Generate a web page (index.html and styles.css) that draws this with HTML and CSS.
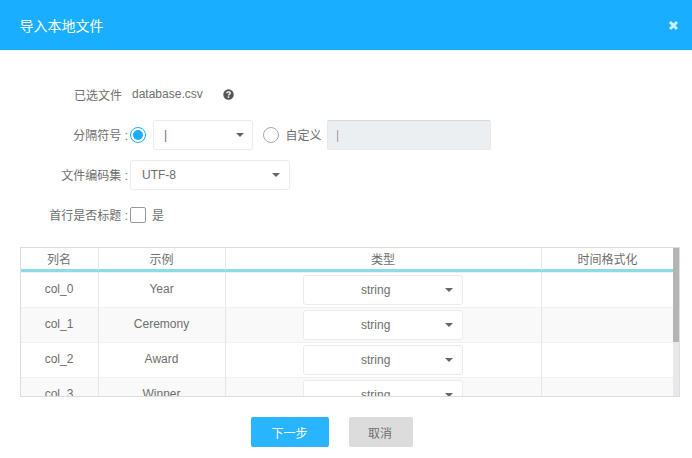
FILE: index.html
```html
<!DOCTYPE html>
<html lang="en">
  <head>
    <meta charset="UTF-8" />
    <meta name="viewport" content="width=device-width, initial-scale=1.0" />
    <title>导入本地文件</title>
    <link rel="stylesheet" href="styles.css">
  </head>
  <body>
    <div class="modal">
      <header class="modal-head">
        <span class="modal-title">导入本地文件</span>
        <svg class="close-icon" width="11" height="11" viewBox="0 0 11 11">
          <path d="M2 2 L9 9 M9 2 L2 9" />
        </svg>
      </header>

      <section class="form">
        <div class="form-row">
          <span class="form-label form-label-plain">已选文件</span>
          <span class="file-name">database.csv</span>
          <svg class="help-icon" width="11" height="11" viewBox="0 0 12 12">
            <circle cx="6" cy="6" r="5.7" fill="#555" />
            <path d="M4.1 4.7 C4.1 2.6 7.9 2.6 7.9 4.5 C7.9 5.7 6 5.7 6 7.2" fill="none" stroke="#fff" stroke-width="1.5" />
            <rect x="5.2" y="8" width="1.6" height="1.6" fill="#fff" />
          </svg>
        </div>

        <div class="form-row">
          <span class="form-label">分隔符号 :</span>
          <span class="radio radio-on"></span>
          <div class="select select-sep">
            <span>|</span>
            <i class="caret"></i>
          </div>
          <span class="radio radio-custom"></span>
          <span class="custom-label">自定义</span>
          <div class="custom-input">|</div>
        </div>

        <div class="form-row">
          <span class="form-label">文件编码集 :</span>
          <div class="select select-enc">
            <span>UTF-8</span>
            <i class="caret"></i>
          </div>
        </div>

        <div class="form-row">
          <span class="form-label">首行是否标题 :</span>
          <span class="checkbox"></span>
          <span class="check-label">是</span>
        </div>
      </section>

      <div class="table-box">
        <div class="table-clip">
          <table class="col-table">
            <thead>
              <tr>
                <th class="col-name">列名</th>
                <th class="col-sample">示例</th>
                <th class="col-type">类型</th>
                <th>时间格式化</th>
              </tr>
            </thead>
            <tbody>
              <tr>
                <td>col_0</td>
                <td>Year</td>
                <td><div class="select select-type"><span>string</span><i class="caret"></i></div></td>
                <td></td>
              </tr>
              <tr>
                <td>col_1</td>
                <td>Ceremony</td>
                <td><div class="select select-type"><span>string</span><i class="caret"></i></div></td>
                <td></td>
              </tr>
              <tr>
                <td>col_2</td>
                <td>Award</td>
                <td><div class="select select-type"><span>string</span><i class="caret"></i></div></td>
                <td></td>
              </tr>
              <tr>
                <td>col_3</td>
                <td>Winner</td>
                <td><div class="select select-type"><span>string</span><i class="caret"></i></div></td>
                <td></td>
              </tr>
            </tbody>
          </table>
        </div>
        <div class="scroll-track"><div class="scroll-thumb"></div></div>
      </div>

      <footer class="modal-foot">
        <button class="btn btn-primary">下一步</button>
        <button class="btn btn-cancel">取消</button>
      </footer>
    </div>
  </body>
</html>
```

FILE: styles.css
```css
* {
  margin: 0;
  box-sizing: border-box;
}

body {
  background: #fff;
  font-family: "Liberation Sans", "Noto Sans CJK SC", sans-serif;
  font-size: 12px;
  color: #6e6e6e;
  overflow: hidden;
}

.modal {
  width: 692px;
  height: 458px;
}

.modal-head {
  height: 50px;
  background-color: #19aeff;
  color: #fff;
  display: flex;
  align-items: center;
  justify-content: space-between;
  padding: 0 13px 0 19.5px;
}

.modal-title {
  font-size: 14px;
}

.close-icon path {
  stroke: #cdeeff;
  stroke-width: 3;
  fill: none;
}

.form {
  padding: 30px 0 0 20px;
  display: flex;
  flex-direction: column;
  gap: 10px;
}

.form-row {
  height: 30px;
  display: flex;
  align-items: center;
}

.form-label {
  width: 108px;
  margin-right: 2px;
  padding-bottom: 2px;
  text-align: right;
  white-space: nowrap;
}

.form-label-plain {
  width: 102px;
  margin-right: 10px;
}

.file-name {
  width: 91px;
  padding-bottom: 2px;
}

.help-icon {
  margin-bottom: 1px;
}

.radio {
  width: 16px;
  height: 16px;
  border: 1px solid #aaa;
  border-radius: 50%;
  background: #fff;
  flex: none;
}

.radio-on {
  border-color: #19aeff;
  display: flex;
  align-items: center;
  justify-content: center;
}

.radio-on::after {
  content: "";
  width: 10px;
  height: 10px;
  border-radius: 50%;
  background: #19aeff;
}

.radio-custom {
  margin-left: 10px;
}

.custom-label {
  margin: 0 5.5px 0 6.5px;
  padding-bottom: 2px;
}

.custom-input {
  width: 164px;
  height: 30px;
  background: #eceff2;
  border: 1px solid #e9e9e9;
  border-top-color: #d9d9d9;
  border-radius: 2px;
  line-height: 28px;
  padding-left: 8px;
  color: #999;
}

.select {
  height: 30px;
  border: 1px solid #ebebeb;
  border-radius: 3px;
  background: #fff;
  display: flex;
  align-items: center;
  justify-content: space-between;
  flex: none;
}

.select-sep {
  width: 100px;
  margin-left: 7px;
  padding: 0 8px 0 10px;
}

.select-enc {
  width: 160px;
  padding: 0 9px 0 11px;
}

.select-type {
  width: 160px;
  margin: 2px 0 0 77px;
  padding: 0 9px 0 57px;
}

.caret {
  width: 0;
  height: 0;
  border-left: 4px solid transparent;
  border-right: 4px solid transparent;
  border-top: 4px solid #666;
}

.checkbox {
  width: 16px;
  height: 16px;
  border: 1px solid #999;
  border-radius: 2px;
  flex: none;
}

.check-label {
  margin-left: 6px;
  padding-bottom: 2px;
}

.table-box {
  margin: 17px 0 0 20px;
  width: 660px;
  height: 150px;
  border: 1px solid #ddd;
  display: flex;
}

.table-clip {
  width: 653px;
  overflow: hidden;
}

.col-table {
  width: 653px;
  border-collapse: separate;
  border-spacing: 0;
  table-layout: fixed;
}

.col-name {
  width: 78px;
}

.col-sample {
  width: 127px;
}

.col-type {
  width: 316px;
}

.col-table th {
  height: 24px;
  padding: 0 1px 0 0;
  font-weight: normal;
  border-bottom: 3px solid #8adce6;
  border-right: 1px solid #e6e6e6;
}

.col-table th:last-child,
.col-table td:last-child {
  border-right: none;
}

.col-table td {
  height: 35px;
  padding: 0 1px 2px 0;
  text-align: center;
  border-right: 1px solid #e6e6e6;
  border-top: 1px solid #f0f0f2;
}

.col-table tbody tr:nth-child(even) {
  background: #f9f9f9;
}

.scroll-track {
  width: 6px;
  background: #e8e8ec;
}

.scroll-thumb {
  height: 94px;
  background: #b4b4b4;
}

.modal-foot {
  margin-top: 20px;
  padding-right: 28px;
  display: flex;
  justify-content: center;
  gap: 20px;
}

.btn {
  height: 30px;
  border: none;
  border-radius: 2px;
  padding: 0 8px 0 6px;
  font-family: inherit;
  font-size: 12px;
}

.btn-primary {
  width: 78px;
  padding-right: 7px;
  background: #29b4ff;
  color: #fff;
}

.btn-cancel {
  width: 64px;
  background: #dcdcdc;
  color: #6e6e6e;
}
```
